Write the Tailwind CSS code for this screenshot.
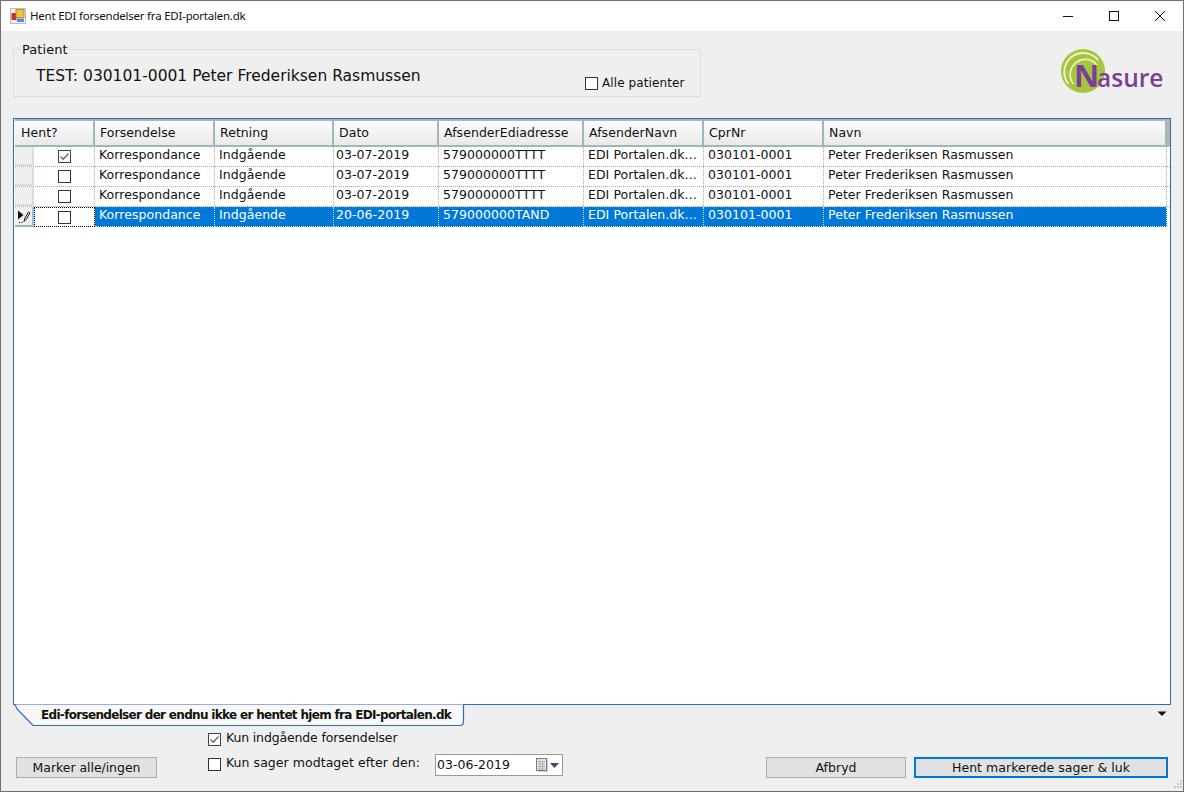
<!DOCTYPE html>
<html><head><meta charset="utf-8"><script src="https://cdn.jsdelivr.net/npm/@tailwindcss/browser@4"></script></head>
<body class="m-0 overflow-hidden">
<div class="w-[1184px] h-[792px] flex flex-col border border-[#6f6f6f] bg-[#efefef] text-[#111] text-[12.5px] tracking-[0.05px] font-['DejaVu_Sans',sans-serif] relative">
  <!-- title bar -->
  <div class="h-[30px] bg-white flex items-center shrink-0">
    <svg class="ml-[9px] w-[16px] h-[16px]" viewBox="0 0 16 16"><rect x="0.5" y="0.5" width="15" height="15" fill="#f2f2f2" stroke="#bdbdbd"/><rect x="1.5" y="5" width="5" height="7" fill="#c8302a"/><rect x="6" y="1.5" width="8" height="8" fill="#f2c23a" stroke="#a88420" stroke-width="0.8"/><rect x="7" y="10.5" width="7" height="3.5" fill="#5a88d8"/></svg>
    <span class="ml-[4px] font-['Noto_Sans',sans-serif] text-[11.5px] tracking-[-0.22px]">Hent EDI forsendelser fra EDI-portalen.dk</span>
    <div class="ml-auto flex h-full items-center">
      <svg class="w-[46px] h-[30px]" viewBox="0 0 46 30"><path d="M18 15.5H28" stroke="#111"/></svg>
      <svg class="w-[46px] h-[30px]" viewBox="0 0 46 30"><rect x="18.5" y="10.5" width="9" height="9" fill="none" stroke="#111"/></svg>
      <svg class="w-[46px] h-[30px]" viewBox="0 0 46 30"><path d="M18 10L28 20M28 10L18 20" stroke="#111"/></svg>
    </div>
  </div>
  <!-- patient row -->
  <div class="h-[87px] shrink-0 flex pl-[12px] pr-[20px] pt-[18px] items-start">
    <div class="relative w-[688px] h-[48px] border border-[#dcdcdc]">
      <span class="absolute left-[7px] top-[-8px] bg-[#efefef] px-[1px] text-[13px] leading-[15px]">Patient</span>
      <div class="pl-[22px] pt-[17px] text-[15.5px] leading-[18px] tracking-[0]">TEST: 030101-0001 Peter Frederiksen Rasmussen</div>
      <label class="absolute left-[571px] top-[26px] flex items-center gap-[4px] leading-[14px]"><span class="w-[13px] h-[13px] border border-[#333] bg-white"></span><span class="text-[12px] tracking-[0.1px]">Alle patienter</span></label>
    </div>
    <div class="ml-auto -mt-[1px] flex items-center relative w-[103px] h-[46px]">
      <svg class="absolute left-0 top-0 w-[46px] h-[46px]" viewBox="0 0 46 46"><circle cx="23" cy="23" r="22" fill="#a6c73c"/><path d="M8.5 36A18.5 18.5 0 0 1 38 12" fill="none" stroke="#eef3d5" stroke-width="1.8"/><path d="M13.5 36A14 14 0 0 1 37 17" fill="none" stroke="#eef3d5" stroke-width="1.6"/></svg>
      <span class="absolute left-[14px] top-[9px] font-['Open_Sans',sans-serif] font-bold text-[#7b3f98] text-[31px] leading-[36px] tracking-[0]">N</span>
      <span class="absolute left-[37px] top-[14px] font-['Open_Sans',sans-serif] font-semibold text-[#7b3f98] text-[24.5px] leading-[32px] tracking-[0]">asure</span>
    </div>
  </div>
  <!-- grid -->
  <div class="ml-[12px] mr-[12px] h-[587px] shrink-0 border border-[#2a6bc8] pl-[1px] bg-white">
    <div class="grid grid-cols-[80px_120px_119px_105px_145px_120px_120px_343px_3px] h-[28px] bg-[#b4b4b4] pt-[2px]">
      <div class="bg-gradient-to-b from-[#fcfcfc] to-[#e9e9e9] border-r-2 border-b-2 border-[#9cb8b8] pl-[6px] pt-[4px] leading-[15px]">Hent?</div>
      <div class="bg-gradient-to-b from-[#fcfcfc] to-[#e9e9e9] border-r-2 border-b-2 border-[#9cb8b8] pl-[5px] pt-[4px] leading-[15px]">Forsendelse</div>
      <div class="bg-gradient-to-b from-[#fcfcfc] to-[#e9e9e9] border-r-2 border-b-2 border-[#9cb8b8] pl-[5px] pt-[4px] leading-[15px]">Retning</div>
      <div class="bg-gradient-to-b from-[#fcfcfc] to-[#e9e9e9] border-r-2 border-b-2 border-[#9cb8b8] pl-[5px] pt-[4px] leading-[15px]">Dato</div>
      <div class="bg-gradient-to-b from-[#fcfcfc] to-[#e9e9e9] border-r-2 border-b-2 border-[#9cb8b8] pl-[5px] pt-[4px] leading-[15px]">AfsenderEdiadresse</div>
      <div class="bg-gradient-to-b from-[#fcfcfc] to-[#e9e9e9] border-r-2 border-b-2 border-[#9cb8b8] pl-[5px] pt-[4px] leading-[15px]">AfsenderNavn</div>
      <div class="bg-gradient-to-b from-[#fcfcfc] to-[#e9e9e9] border-r-2 border-b-2 border-[#9cb8b8] pl-[5px] pt-[4px] leading-[15px]">CprNr</div>
      <div class="bg-gradient-to-b from-[#fcfcfc] to-[#e9e9e9] border-r-2 border-b-2 border-[#9cb8b8] pl-[5px] pt-[4px] leading-[15px]">Navn</div>
    </div>
    <!-- row 1 -->
    <div class="grid grid-cols-[19px_61px_120px_119px_105px_145px_120px_120px_343px] h-[20px] leading-[15px] border-b border-dotted border-[#aaa]">
      <div class="bg-[#efefef] border-r-2 border-b-2 border-[#d4dfdf]"></div>
      <div class="flex justify-center items-center border-r border-dotted border-[#aaa]"><svg class="w-[13px] h-[13px]" viewBox="0 0 13 13"><rect x="0.5" y="0.5" width="12" height="12" fill="#fff" stroke="#444"/><path d="M2.5 6.5L5.2 9.3L10.5 3.5" fill="none" stroke="#666" stroke-width="1.3"/></svg></div>
      <div class="pl-[4px] border-r border-dotted border-[#aaa]">Korrespondance</div><div class="pl-[4px] border-r border-dotted border-[#aaa]">Indgående</div><div class="pl-[2px] border-r border-dotted border-[#aaa]">03-07-2019</div><div class="pl-[4px] border-r border-dotted border-[#aaa]">579000000TTTT</div><div class="pl-[4px] border-r border-dotted border-[#aaa]">EDI Portalen.dk...</div><div class="pl-[4px] border-r border-dotted border-[#aaa]">030101-0001</div><div class="pl-[4px] border-r border-dotted border-[#aaa]">Peter Frederiksen Rasmussen</div>
    </div>
    <!-- row 2 -->
    <div class="grid grid-cols-[19px_61px_120px_119px_105px_145px_120px_120px_343px] h-[20px] leading-[15px] border-b border-dotted border-[#aaa]">
      <div class="bg-[#efefef] border-r-2 border-b-2 border-[#d4dfdf]"></div>
      <div class="flex justify-center items-center border-r border-dotted border-[#aaa]"><span class="w-[13px] h-[13px] border border-[#333] bg-white"></span></div>
      <div class="pl-[4px] border-r border-dotted border-[#aaa]">Korrespondance</div><div class="pl-[4px] border-r border-dotted border-[#aaa]">Indgående</div><div class="pl-[2px] border-r border-dotted border-[#aaa]">03-07-2019</div><div class="pl-[4px] border-r border-dotted border-[#aaa]">579000000TTTT</div><div class="pl-[4px] border-r border-dotted border-[#aaa]">EDI Portalen.dk...</div><div class="pl-[4px] border-r border-dotted border-[#aaa]">030101-0001</div><div class="pl-[4px] border-r border-dotted border-[#aaa]">Peter Frederiksen Rasmussen</div>
    </div>
    <!-- row 3 -->
    <div class="grid grid-cols-[19px_61px_120px_119px_105px_145px_120px_120px_343px] h-[20px] leading-[15px] border-b border-dotted border-[#aaa]">
      <div class="bg-[#efefef] border-r-2 border-b-2 border-[#d4dfdf]"></div>
      <div class="flex justify-center items-center border-r border-dotted border-[#aaa]"><span class="w-[13px] h-[13px] border border-[#333] bg-white"></span></div>
      <div class="pl-[4px] border-r border-dotted border-[#aaa]">Korrespondance</div><div class="pl-[4px] border-r border-dotted border-[#aaa]">Indgående</div><div class="pl-[2px] border-r border-dotted border-[#aaa]">03-07-2019</div><div class="pl-[4px] border-r border-dotted border-[#aaa]">579000000TTTT</div><div class="pl-[4px] border-r border-dotted border-[#aaa]">EDI Portalen.dk...</div><div class="pl-[4px] border-r border-dotted border-[#aaa]">030101-0001</div><div class="pl-[4px] border-r border-dotted border-[#aaa]">Peter Frederiksen Rasmussen</div>
    </div>
    <!-- row 4 selected -->
    <div class="grid grid-cols-[19px_61px_120px_119px_105px_145px_120px_120px_343px] h-[20px] leading-[15px]">
      <div class="bg-[#efefef] border-r-2 border-b-2 border-r-[#8fc0ea] border-b-[#9cb8b8] flex items-center justify-center">
        <svg class="w-[16px] h-[15px]" viewBox="0 0 16 15"><path d="M2 1.5L7.5 6L2 10.5Z" fill="#111"/><path d="M8 12.5L9 9L12.5 3L14 4L10.5 10Z" fill="#fff" stroke="#111" stroke-width="1"/><path d="M3 13.5H4M5.5 13.5H6.5" stroke="#111"/></svg>
      </div>
      <div class="flex justify-center items-center bg-white border border-dotted border-black"><span class="w-[13px] h-[13px] border border-[#333] bg-white"></span></div>
      <div class="pl-[4px] bg-[#0078d7] text-white border-r border-b border-dotted border-[#cfe4f7]">Korrespondance</div><div class="pl-[4px] bg-[#0078d7] text-white border-r border-b border-dotted border-[#cfe4f7]">Indgående</div><div class="pl-[2px] bg-[#0078d7] text-white border-r border-b border-dotted border-[#cfe4f7]">20-06-2019</div><div class="pl-[4px] bg-[#0078d7] text-white border-r border-b border-dotted border-[#cfe4f7]">579000000TAND</div><div class="pl-[4px] bg-[#0078d7] text-white border-r border-b border-dotted border-[#cfe4f7]">EDI Portalen.dk...</div><div class="pl-[4px] bg-[#0078d7] text-white border-r border-b border-dotted border-[#cfe4f7]">030101-0001</div><div class="pl-[4px] bg-[#0078d7] text-white border-r border-b border-dotted border-[#cfe4f7]">Peter Frederiksen Rasmussen</div>
    </div>
  </div>
  <!-- tab strip -->
  <div class="relative h-[25px] shrink-0 -mt-[1px]">
    <svg class="absolute left-[13px] top-0 w-[452px] h-[23px]" viewBox="0 0 452 23"><path d="M1 0.5L3 5L8 10L19 21.5H446Q449.5 21.5 449.5 18V0.5" fill="#f9f8f6" stroke="#2a6bc8" stroke-width="1.2"/></svg>
    <span class="absolute left-[40px] top-[3px] font-bold text-[12px] leading-[17px] tracking-[-0.68px]">Edi-forsendelser der endnu ikke er hentet hjem fra EDI-portalen.dk</span>
    <svg class="absolute left-[1156px] top-[7px] w-[10px] h-[6px]" viewBox="0 0 10 6"><path d="M0.5 0.5H9.5L5 5Z" fill="#111"/></svg>
  </div>
  <!-- bottom -->
  <div class="flex flex-1 pl-[15px] pr-[15px] relative">
    <div class="w-[192px] shrink-0 flex items-start pt-[28px]">
      <button class="w-[141px] h-[21px] border border-[#adadad] bg-[#e1e1e1] leading-[15px] tracking-[-0.05px]">Marker alle/ingen</button>
    </div>
    <div class="flex flex-col pt-[3px]">
      <div class="flex items-center h-[14px] gap-[5px]"><svg class="w-[13px] h-[13px]" viewBox="0 0 13 13"><rect x="0.5" y="0.5" width="12" height="12" fill="#fff" stroke="#444"/><path d="M2.5 6.5L5.2 9.3L10.5 3.5" fill="none" stroke="#666" stroke-width="1.3"/></svg><span class="-mt-[2px] tracking-[-0.15px]">Kun indgående forsendelser</span></div>
      <div class="flex items-start mt-[8px]">
        <div class="flex items-center h-[16px] gap-[5px] mt-[2px]"><span class="w-[13px] h-[13px] border border-[#333] bg-white"></span><span class="-mt-[2px]">Kun sager modtaget efter den:</span></div>
        <div class="ml-[15px] w-[128px] h-[22px] border border-[#9a9a9a] bg-white flex items-center pl-[1px]"><span class="pt-[1px]">03-06-2019</span>
          <svg class="ml-auto w-[12px] h-[14px]" viewBox="0 0 12 14"><rect x="0.5" y="0.5" width="10" height="12" fill="#e4e4e4" stroke="#857a70"/><path d="M2 3.5H9M2 6H9M2 8.5H9M2 11H9M4 3V12M6.5 3V12" stroke="#aaa" stroke-width="0.8"/><path d="M11.5 2V13.5H2" fill="none" stroke="#ccc"/></svg>
          <svg class="ml-[2px] mr-[3px] w-[9px] h-[5px]" viewBox="0 0 9 5"><path d="M0 0H9L4.5 5Z" fill="#33506e"/></svg>
        </div>
      </div>
    </div>
    <div class="ml-auto flex items-start gap-[8px] pt-[28px]">
      <button class="w-[140px] h-[21px] border border-[#adadad] bg-[#e1e1e1] leading-[15px]">Afbryd</button>
      <button class="w-[254px] h-[21px] border-2 border-[#0078d7] bg-[#e1e1e1] leading-[15px]">Hent markerede sager &amp; luk</button>
    </div>
    <svg class="absolute right-0 bottom-0 w-[12px] h-[12px]" viewBox="0 0 12 12"><path d="M9 1h2v2H9zM6 4h2v2H6zM9 4h2v2H9zM3 7h2v2H3zM6 7h2v2H6zM9 7h2v2H9z" fill="#c9c9c9"/></svg>
  </div>
</div>
</body></html>
